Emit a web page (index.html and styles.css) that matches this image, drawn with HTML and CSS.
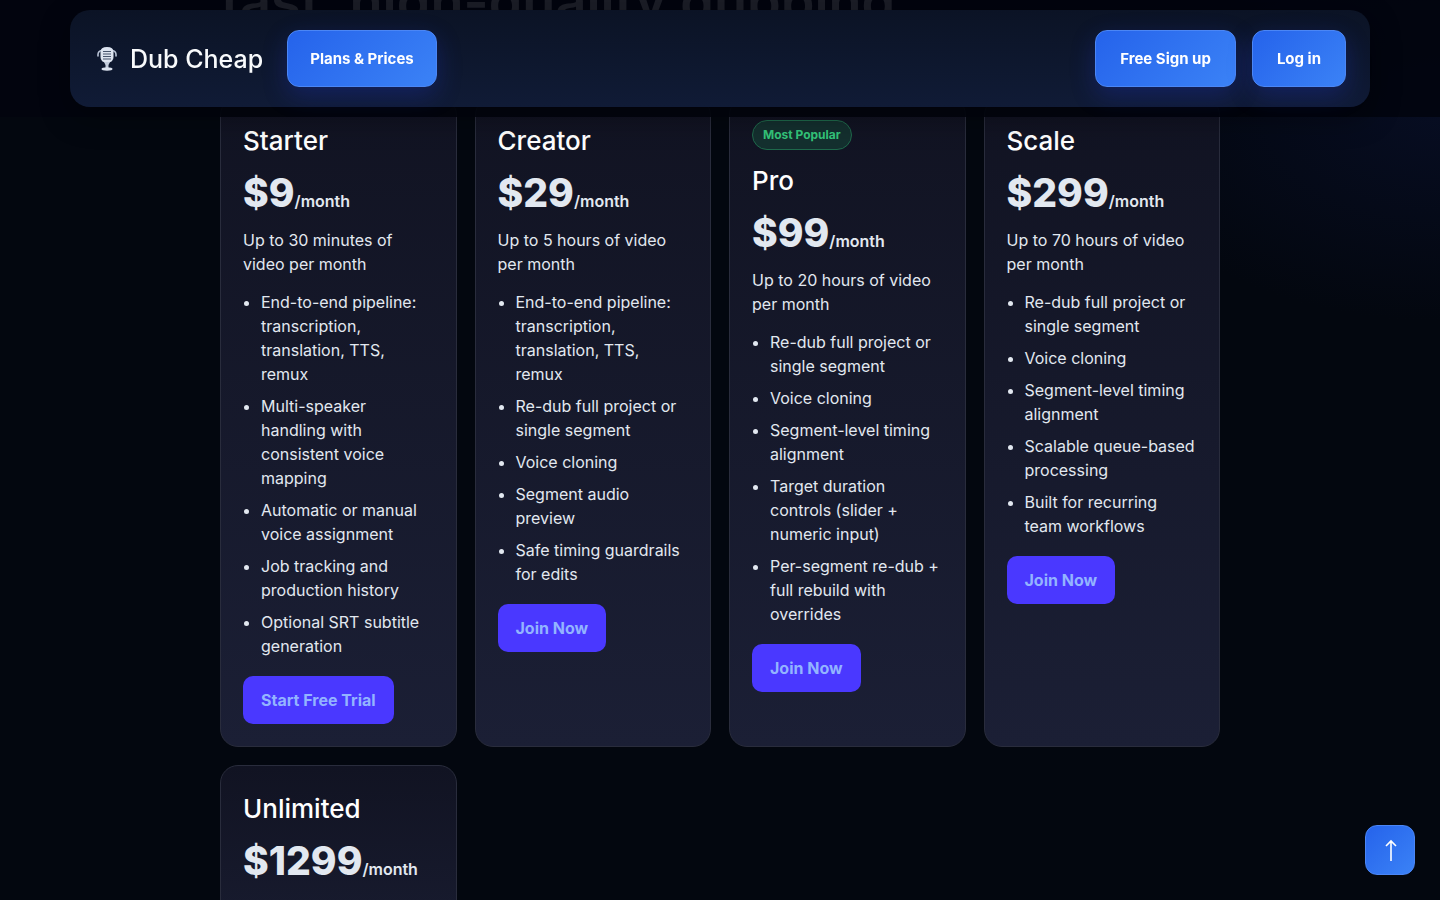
FILE: index.html
```html
<!DOCTYPE html>
<html lang="en">
<head>
    <meta charset="UTF-8">
    <meta name="viewport" content="width=device-width, initial-scale=1.0">
    <title>Dub Cheap - Plans &amp; Prices</title>
    <link rel="stylesheet" href="styles.css">
</head>
<body>
    <header class="site-header">
        <nav class="navbar">
            <a href="#" class="brand">
                <svg class="brand-icon" viewBox="0 0 20 24" aria-hidden="true">
                    <path d="M1 9V7.500q0-3.500 4-4M19 9V7.500q0-3.500-4-4" fill="none" stroke="#b9c3d6" stroke-width="1.600" stroke-linecap="round"/>
                    <path d="M3.500 5q0-5 6.500-5t6.500 5v5q0 5.500-6.500 5.500T3.500 10z" fill="#dce3ef"/>
                    <path d="M6 4.500h8M6 7h8M6 9.500h8M6 12h8" stroke="#46546c" stroke-width="1.200"/>
                    <path d="M7 15h6l-1.500 3v3h-3v-3z" fill="#c3ccdc"/>
                    <ellipse cx="10" cy="22" rx="5.500" ry="1.700" fill="#dce3ef"/>
                </svg>
                <span>Dub Cheap</span>
            </a>
            <a href="#plans" class="nav-btn nav-plans">Plans &amp; Prices</a>
            <div class="nav-right">
                <a href="#" class="nav-btn">Free Sign up</a>
                <a href="#" class="nav-btn">Log in</a>
            </div>
        </nav>
    </header>

    <main class="container">
        <h1 class="hero-title">fast, high-quality dubbing</h1>
        <section class="plans" id="plans">
            <article class="card">
                <h2>Starter</h2>
                <p class="price">$9<span>/month</span></p>
                <p class="limit">Up to 30 minutes of video per month</p>
                <ul>
                    <li>End-to-end pipeline: transcription, translation, TTS, remux</li>
                    <li>Multi-speaker handling with consistent voice mapping</li>
                    <li>Automatic or manual voice assignment</li>
                    <li>Job tracking and production history</li>
                    <li>Optional SRT subtitle generation</li>
                </ul>
                <a href="#" class="join-btn">Start Free Trial</a>
            </article>
            <article class="card">
                <h2>Creator</h2>
                <p class="price">$29<span>/month</span></p>
                <p class="limit">Up to 5 hours of video per month</p>
                <ul>
                    <li>End-to-end pipeline: transcription, translation, TTS, remux</li>
                    <li>Re-dub full project or single segment</li>
                    <li>Voice cloning</li>
                    <li>Segment audio preview</li>
                    <li>Safe timing guardrails for edits</li>
                </ul>
                <a href="#" class="join-btn">Join Now</a>
            </article>
            <article class="card">
                <div class="badge">Most Popular</div>
                <h2>Pro</h2>
                <p class="price">$99<span>/month</span></p>
                <p class="limit">Up to 20 hours of video per month</p>
                <ul>
                    <li>Re-dub full project or single segment</li>
                    <li>Voice cloning</li>
                    <li>Segment-level timing alignment</li>
                    <li>Target duration controls (slider + numeric input)</li>
                    <li>Per-segment re-dub + full rebuild with overrides</li>
                </ul>
                <a href="#" class="join-btn">Join Now</a>
            </article>
            <article class="card">
                <h2>Scale</h2>
                <p class="price">$299<span>/month</span></p>
                <p class="limit">Up to 70 hours of video per month</p>
                <ul>
                    <li>Re-dub full project or single segment</li>
                    <li>Voice cloning</li>
                    <li>Segment-level timing alignment</li>
                    <li>Scalable queue-based processing</li>
                    <li>Built for recurring team workflows</li>
                </ul>
                <a href="#" class="join-btn">Join Now</a>
            </article>
            <article class="card">
                <h2>Unlimited</h2>
                <p class="price">$1299<span>/month</span></p>
            </article>
        </section>
    </main>

    <button type="button" class="to-top" aria-label="Back to top">
        <svg viewBox="0 0 24 24" aria-hidden="true">
            <path d="M13 23V3M8 8l5-5 5 5" fill="none" stroke="#fff" stroke-width="1.600"/>
        </svg>
    </button>
</body>
</html>
```
FILE: styles.css
```css
* {
    box-sizing: border-box;
}
body {
    margin: 0;
    background: radial-gradient(ellipse at 100% 110px, #070d22 0, #03070f 340px) no-repeat #03070f;
    color: #e2e8f0;
    font-family: Inter, sans-serif;
    font-size: 16px;
    line-height: 24px;
}
a {
    text-decoration: none;
}

/* header */
.site-header {
    position: fixed;
    top: 0;
    left: 0;
    right: 0;
    z-index: 10;
    padding: 10px 70px;
    background: rgba(2, 4, 14, 0.9);
}
.navbar {
    display: flex;
    align-items: center;
    gap: 24px;
    padding: 20px 24px;
    border-radius: 20px;
    background: linear-gradient(180deg, #0b1325, #101b36);
    box-shadow: 0 10px 30px rgba(0, 0, 0, 0.35);
}
.brand {
    display: flex;
    align-items: center;
    gap: 13px;
    padding-left: 3px;
    color: #f8fafc;
    font-size: 25px;
    font-weight: 500;
}
.brand-icon {
    width: 20px;
    height: 24px;
}
.nav-btn {
    padding: 16px 24px;
    border: 1px solid #4b86f5;
    border-radius: 12px;
    background: linear-gradient(135deg, #2563eb, #3b82f6);
    box-shadow: 0 8px 24px rgba(37, 60, 235, 0.25);
    color: #fff;
    font-size: 15px;
    font-weight: 700;
    line-height: 23px;
}
.nav-plans {
    padding: 16px 22px;
}
.nav-right {
    display: flex;
    gap: 16px;
    margin-left: auto;
}

/* plans */
.container {
    display: flow-root;
    max-width: 1000px;
    margin: 0 auto;
}
.hero-title {
    margin: -30px 0 63px;
    color: #fff;
    font-size: 54px;
    font-weight: 600;
    line-height: 64px;
}
.plans {
    display: grid;
    grid-template-columns: repeat(4, 1fr);
    gap: 18px;
}
.card {
    min-height: 240px;
    padding: 22px;
    border: 1px solid #292c3c;
    border-radius: 18px;
    background: linear-gradient(180deg, #111322, #1b1f35);
}
.card h2 {
    margin: 0 0 8px;
    color: #fff;
    font-size: 26px;
    font-weight: 500;
    line-height: 42px;
}
.card p {
    margin: 0;
}
.card .price {
    margin-bottom: 12px;
    font-size: 39px;
    font-weight: 800;
    line-height: 46px;
}
.price span {
    font-size: 16px;
    font-weight: 600;
    line-height: 16px;
}
.card ul {
    margin: 14px 0 18px;
    padding-left: 18px;
}
.card li + li {
    margin-top: 8px;
}
.badge {
    width: fit-content;
    margin-bottom: 10px;
    padding: 2px 10px;
    border: 1px solid #1f6a4c;
    border-radius: 15px;
    background: #14302f;
    color: #34c77b;
    font-size: 12px;
    font-weight: 700;
}
.join-btn {
    display: inline-block;
    padding: 12px 18px;
    border-radius: 10px;
    background: #4a38ff;
    color: #93b4ff;
    font-weight: 700;
}

.to-top {
    position: fixed;
    right: 25px;
    bottom: 25px;
    display: flex;
    align-items: center;
    justify-content: center;
    width: 50px;
    height: 50px;
    padding: 0;
    border: 1px solid #4b86f5;
    border-radius: 12px;
    background: linear-gradient(135deg, #2563eb, #3b82f6);
    cursor: pointer;
}
.to-top svg {
    width: 24px;
    height: 24px;
}
```
